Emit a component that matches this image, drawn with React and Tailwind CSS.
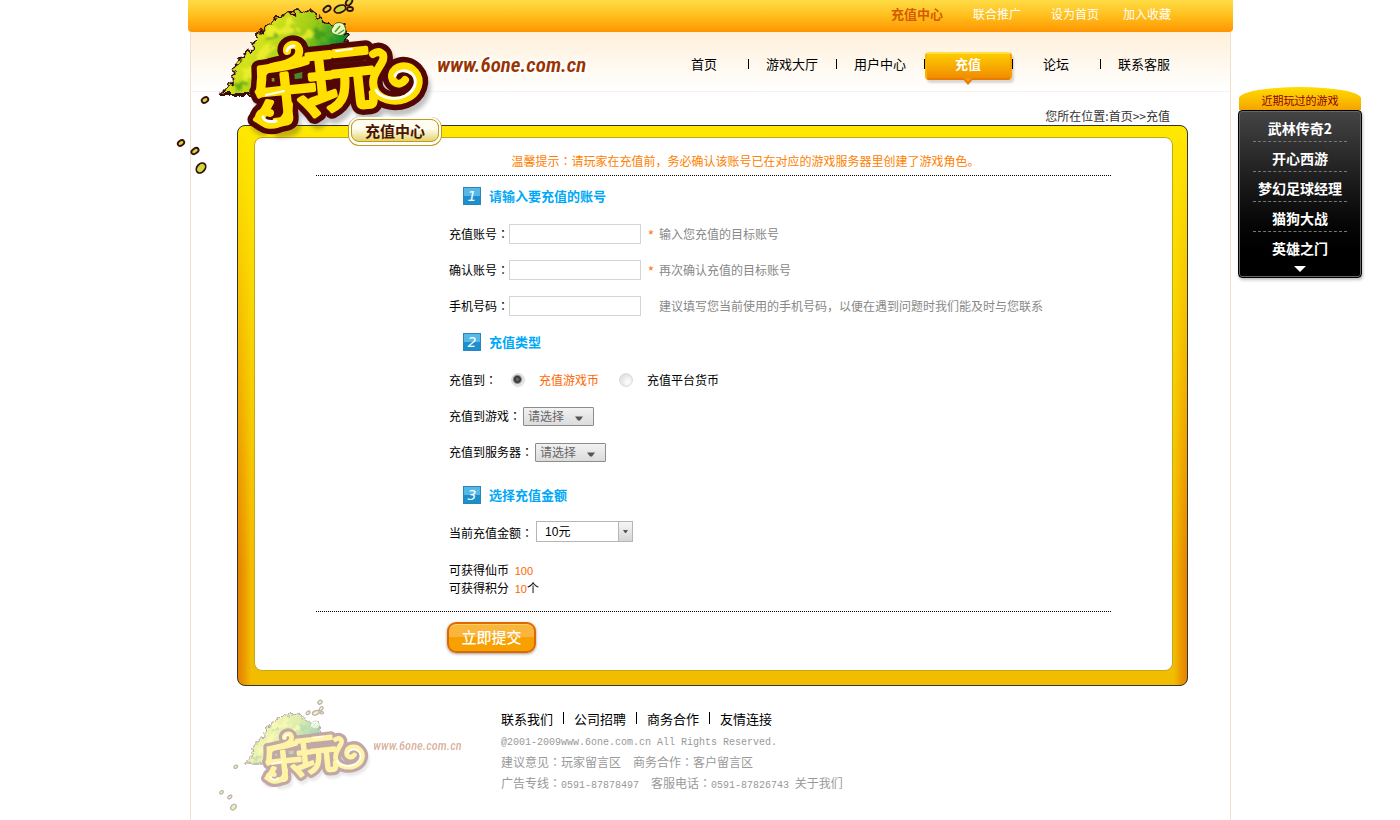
import React from "react";

const TOP_LINKS = ["设为首页", "加入收藏"];
const NAV = ["首页", "游戏大厅", "用户中心", "充值", "论坛", "联系客服"];
const GAMES = ["武林传奇2", "开心西游", "梦幻足球经理", "猫狗大战", "英雄之门"];
const FOOT_LINKS = ["联系我们", "公司招聘", "商务合作", "友情连接"];

const LEAVES = [
  [327, 9, 4, 2.5, -35],
  [340, 9, 6, 3.5, -20],
  [349, 2, 4, 2.5, -50],
  [350, 9, 3, 2, 0],
  [347, -9, 4, 3, -40],
  [205, 100, 3.5, 2.5, -30],
  [181, 143, 3.5, 2.5, -35],
  [195, 151, 4, 2.5, -35],
  [201, 168, 5.5, 4, -50],
];

const SWIRL =
  "M373 54 C379 50 385 53 383 60 C380 68 370 76 374 88 C378 100 394 103 405 99 C419 94 422 80 415 72 C408 63 394 65 392 75 C391 83 400 87 405 80";
const HEAD_CURL = "M287 51 C286 44 297 42 299 49 C301 57 292 63 276 66 C270 67 266 69 263 73";
const FOOT_CURL = "M270 113 C258 109 255 120 266 124 C278 127 288 120 289 105";

function LogoText({ className, strokeWidth }) {
  return (
    <g
      className={className}
      strokeWidth={strokeWidth}
      strokeLinejoin="round"
      fontFamily="'Noto Sans CJK SC', sans-serif"
      fontWeight="400"
    >
      <text x="250" y="118" fontSize="70" transform="rotate(-6 290 95)">乐</text>
      <text x="306" y="104" fontSize="70" transform="rotate(-6 345 80)">玩</text>
    </g>
  );
}

function Logo({ viewBox, className, id }) {
  return (
    <svg viewBox={viewBox} className={className} role="img" aria-label="乐玩">
      <defs>
        <linearGradient id={id + "tree"} x1="0" y1="0.2" x2="1" y2="0.6">
          <stop offset="0" stopColor="#a8d010" />
          <stop offset="0.3" stopColor="#d3e31c" />
          <stop offset="0.55" stopColor="#9ccb18" />
          <stop offset="0.78" stopColor="#12902a" />
          <stop offset="1" stopColor="#064a1c" />
        </linearGradient>
        <filter id={id + "soft"} x="-20%" y="-20%" width="140%" height="140%">
          <feGaussianBlur stdDeviation="2" />
        </filter>
        <filter id={id + "leafy"} x="-10%" y="-10%" width="120%" height="120%">
          <feTurbulence type="fractalNoise" baseFrequency="0.16" numOctaves="2" seed="4" result="n" />
          <feDisplacementMap in="SourceGraphic" in2="n" scale="9" xChannelSelector="R" yChannelSelector="G" />
        </filter>
        <filter id={id + "patch"} x="-30%" y="-30%" width="160%" height="160%">
          <feTurbulence type="fractalNoise" baseFrequency="0.08" numOctaves="2" seed="9" result="n" />
          <feDisplacementMap in="SourceGraphic" in2="n" scale="22" xChannelSelector="R" yChannelSelector="G" />
          <feGaussianBlur stdDeviation="1.2" />
        </filter>
      </defs>
      <path
        filter={"url(#" + id + "leafy)"}
        d="M220 94 L228 88 L227 84 L233 83 L232 76 L236 73 L233 67 L238 64 L237 60 L244 59 L246 52 L253 50 L252 43 L257 40 L257 34 L262 31 L267 25 L272 23 L275 17 L282 17 L286 12 L293 13 L298 10 L305 12 L310 10 L315 14 L318 19 L325 21 L330 25 L336 26 L343 24 L345 30 L348 34 L345 39 L352 46 L362 60 L364 76 L340 90 L300 94 Z"
        fill={"url(#" + id + "tree)"}
        stroke="#3a1010"
        strokeWidth="1.8"
      />
      <g filter={"url(#" + id + "patch)"}>
        <g fill="#f4f232" opacity="0.75">
          <ellipse cx="283" cy="29" rx="15" ry="6" transform="rotate(-25 283 29)" />
          <ellipse cx="265" cy="52" rx="12" ry="5" transform="rotate(-35 265 52)" />
          <ellipse cx="248" cy="72" rx="9" ry="5" transform="rotate(-20 248 72)" />
          <ellipse cx="303" cy="38" rx="10" ry="5" />
        </g>
        <g fill="#2f8f18" opacity="0.6">
          <ellipse cx="293" cy="46" rx="9" ry="3" transform="rotate(-25 293 46)" />
          <ellipse cx="263" cy="66" rx="8" ry="3" />
          <ellipse cx="240" cy="85" rx="10" ry="3" transform="rotate(-20 240 85)" />
          <ellipse cx="320" cy="32" rx="7" ry="5" />
          <ellipse cx="272" cy="38" rx="6" ry="2" transform="rotate(-30 272 38)" />
        </g>
      </g>
      <path d="M333 27 C334 21 344 21 345 27 C348 33 342 37 337 35 C332 34 329 31 333 27 Z" fill="#f0f6c0" stroke="#3a7a1c" />
      <path d="M335 32 L340 26 M338 34 L344 30" stroke="#3aa52a" strokeWidth="1.5" />
      {LEAVES.map(([x, y, rx, ry, r]) => (
        <ellipse
          key={x + "-" + y}
          cx={x}
          cy={y}
          rx={rx}
          ry={ry}
          transform={`rotate(${r} ${x} ${y})`}
          fill="#c6dc3c"
          stroke="#3d0c0c"
          strokeWidth="1.8"
        />
      ))}
      <g filter={"url(#" + id + "soft)"} opacity="0.3" transform="translate(3 6)">
        <LogoText className="fill-[#333] stroke-[#333]" strokeWidth="14" />
        <path d={SWIRL} fill="none" stroke="#333" strokeWidth="18" strokeLinecap="round" />
      </g>
      <LogoText className="fill-[#520606] stroke-[#520606]" strokeWidth="15" />
      <g fill="none" stroke="#520606" strokeWidth="19" strokeLinecap="round">
        <path d={SWIRL} />
        <path d={HEAD_CURL} />
        <path d={FOOT_CURL} />
      </g>
      <LogoText className="fill-[#ffe000] stroke-[#ffe000]" strokeWidth="4" />
      <g fill="none" stroke="#ffe000" strokeWidth="8" strokeLinecap="round">
        <path d={SWIRL} />
        <path d={HEAD_CURL} />
        <path d={FOOT_CURL} />
      </g>
      <g fill="none" stroke="#ffffff" strokeWidth="3" strokeLinecap="round">
        <path d="M376 90 C380 98 395 101 405 96 C416 90 418 80 412 74 C406 69 397 70 395 76" />
        <path d="M287 51 C288 47 291 46 294 46" />
        <path d="M263 117 C265 122 271 122 276 121" />
        <path d="M266 95 L284 91 M336 51 L352 49" strokeWidth="2" />
      </g>
      <text
        x="437"
        y="72"
        fontSize="21"
        fontWeight="600"
        fontStyle="italic"
        fontFamily="'Roboto Condensed', Roboto, sans-serif"
        fill="#993300"
        stroke="#ffffff"
        strokeWidth="4"
        strokeLinejoin="round"
        paintOrder="stroke"
      >
        www.6one.com.cn
      </text>
    </svg>
  );
}

function Colon() {
  return <span className="font-['Noto_Sans_CJK_TC',sans-serif]">：</span>;
}

function StepTitle({ n, children, className }) {
  return (
    <h2 className={"flex items-center gap-2 pl-[14px] text-[13px] font-bold text-[#00a8f8] " + className}>
      <span className="flex size-[18px] items-center justify-center border border-[#2a86ba] bg-linear-to-b from-[#56b8e6] from-50% to-[#1b90cc] to-50% font-['DejaVu_Sans',sans-serif] text-[14px] leading-none font-normal text-white italic">
        {n}
      </span>
      {children}
    </h2>
  );
}

function TextRow({ id, label, required, hint }) {
  return (
    <div className="flex h-9 items-center">
      <label htmlFor={id}>
        {label}
        <Colon />
      </label>
      <input id={id} type="text" className="h-5 w-[132px] border border-[#d4d4d4] bg-white px-1 outline-none" />
      <span className="w-[18px] pt-1 pl-[6px] font-['Liberation_Mono',monospace] text-[13px] text-[#ff6600]" aria-hidden="true">
        {required ? "*" : ""}
      </span>
      <span className="text-[#888]">{hint}</span>
    </div>
  );
}

function SelectRow({ id, label }) {
  return (
    <div className="flex h-9 items-center gap-[2px]">
      <label htmlFor={id}>
        {label}
        <Colon />
      </label>
      <span className="grid items-center">
        <select
          id={id}
          className="col-start-1 row-start-1 h-[19px] w-[71px] appearance-none rounded-[1px] border border-[#8c8c8c] bg-linear-to-b from-[#f2f2f2] to-[#dcdcdc] pl-1 text-[12px] leading-[16px] text-[#666] outline-none"
        >
          <option>请选择</option>
        </select>
        <svg viewBox="0 0 8 5" className="pointer-events-none col-start-1 row-start-1 mt-1 mr-[11px] h-[5px] w-2 justify-self-end">
          <path d="M0 0.5H8L5 4.5H3Z" fill="#555" />
        </svg>
      </span>
    </div>
  );
}

function RechargeForm() {
  const radio =
    "size-[14px] appearance-none rounded-full border border-[#ddd] bg-[radial-gradient(circle_at_65%_65%,#fff,#d4d4d4)] checked:bg-[radial-gradient(circle_at_45%_45%,#777_0,#333_3px,#ddd_5px,#eee_7px)]";
  return (
    <form className="px-[61px] pt-[14px] pb-[17px] text-[12px] leading-[18px] text-black" onSubmit={(e) => e.preventDefault()}>
      <p className="border-b border-dotted border-black pb-[5px] pl-16 text-center text-[#ff8000]">
        温馨提示
        <Colon />
        请玩家在充值前，务必确认该账号已在对应的游戏服务器里创建了游戏角色。
      </p>
      <div className="border-b border-dotted border-black pb-[14px] pl-[133px]">
        <StepTitle n="1" className="h-10">请输入要充值的账号</StepTitle>
        <TextRow id="account" label="充值账号" required hint="输入您充值的目标账号" />
        <TextRow id="account2" label="确认账号" required hint="再次确认充值的目标账号" />
        <TextRow id="mobile" label="手机号码" hint="建议填写您当前使用的手机号码，以便在遇到问题时我们能及时与您联系" />

        <StepTitle n="2" className="mb-[2px] h-9">充值类型</StepTitle>
        <div className="flex h-9 items-center" role="radiogroup" aria-label="充值到">
          <span>
            充值到
            <Colon />
          </span>
          <input id="to-game" type="radio" name="target" defaultChecked className={"ml-[14px] " + radio} />
          <label htmlFor="to-game" className="ml-[14px] text-[#ff6600]">充值游戏币</label>
          <input id="to-platform" type="radio" name="target" className={"ml-5 " + radio} />
          <label htmlFor="to-platform" className="ml-[14px]">充值平台货币</label>
        </div>
        <SelectRow id="game" label="充值到游戏" />
        <SelectRow id="server" label="充值到服务器" />

        <StepTitle n="3" className="mt-[7px] mb-[2px] h-9">选择充值金额</StepTitle>
        <div className="flex h-9 items-center gap-[3px]">
          <label htmlFor="amount">
            当前充值金额
            <Colon />
          </label>
          <span className="mb-[3px] grid items-center">
            <select
              id="amount"
              className="col-start-1 row-start-1 h-[21px] w-[97px] appearance-none border border-[#b5b5b5] bg-white pl-2 font-['Liberation_Sans','Noto_Sans_CJK_SC',sans-serif] text-[12px] leading-[16px] text-black outline-none"
            >
              <option>10元</option>
            </select>
            <span className="pointer-events-none col-start-1 row-start-1 flex h-[21px] w-[15px] items-center justify-center justify-self-end border border-[#b5b5b5] bg-linear-to-b from-[#f6f6f6] to-[#d6d6d6]">
              <svg viewBox="0 0 5 3" className="h-[3px] w-[5px]">
                <path d="M0 0H5L3 3H2Z" fill="#555" />
              </svg>
            </span>
          </span>
        </div>
        <p className="mt-[10px] h-[18px]">
          可获得仙币 <span className="ml-[3px] font-['Liberation_Sans',sans-serif] text-[11px] leading-none text-[#ff6600]">100</span>
        </p>
        <p className="h-[18px]">
          可获得积分 <span className="ml-[3px] font-['Liberation_Sans',sans-serif] text-[11px] leading-none text-[#ff6600]">10</span>个
        </p>
      </div>
      <button
        type="submit"
        className="mt-[10px] ml-[131px] block h-[31px] w-[89px] rounded-[9px] border-2 border-[#dd6a00] bg-linear-to-b from-[#f9b53c] from-50% to-[#f8a000] to-50% pb-[2px] text-[15px] leading-[24px] font-medium text-white shadow-[0_1px_3px_rgba(0,0,0,0.4),inset_0_1px_0_#ffd060]"
      >
        立即提交
      </button>
    </form>
  );
}

function Nav() {
  return (
    <nav className="flex justify-end pt-[18px] pr-[42px] text-[13px] text-black">
      {NAV.map((item, i) => (
        <a key={item} href="#" className="relative flex h-7 w-[88px] items-center justify-center">
          {i > 0 && <span className="absolute left-0 h-[10px] w-px bg-black" />}
          {item === "充值" ? (
            <span className="relative mt-1 flex h-7 w-[87px] items-center justify-center rounded-[4px] border-2 border-t-[#ffe040] border-r-[#f6a000] border-b-[#ea7a00] border-l-[#f9b400] bg-linear-to-b from-[#fdcb00] to-[#f08c00] pb-1 font-bold text-white shadow-[2px_3px_2px_rgba(0,0,0,0.15)]">
              {item}
              <svg viewBox="0 0 12 7" className="absolute top-[24px] h-[7px] w-3">
                <path d="M0 0H12L6 7Z" fill="#ea7a00" />
                <path d="M2 0H10L6 4Z" fill="#f59a10" />
              </svg>
            </span>
          ) : (
            item
          )}
        </a>
      ))}
    </nav>
  );
}

function RecentGames() {
  return (
    <aside className="w-[124px] shrink-0 pt-[87px] text-center">
      <h2 className="mx-px h-[23px] rounded-t-[50%] bg-linear-to-b from-[#ffdc00] to-[#f5a400] pt-1 text-[11px] leading-[18px] text-[#8a0000]">
        近期玩过的游戏
      </h2>
      <div className="flex flex-col items-center rounded-[4px] border border-black bg-linear-to-b from-[#454545] to-black pt-px pb-[5px] shadow-[inset_0_0_0_1px_#666,1px_2px_3px_rgba(0,0,0,0.25)]">
        <ul className="w-[94px]">
          {GAMES.map((g) => (
            <li key={g} className="h-[30px] border-b border-dashed border-[#777] pt-[6px] last:border-0">
              <a href="#" className="-mx-3 block text-[14px] leading-[20px] font-bold whitespace-nowrap text-white">
                {g}
              </a>
            </li>
          ))}
        </ul>
        <button type="button" aria-label="更多" className="mt-[3px] flex h-[7px] w-5 items-center justify-center">
          <svg viewBox="0 0 12 6" className="h-[6px] w-3">
            <path d="M0 0H12L6 6Z" fill="#fff" />
          </svg>
        </button>
      </div>
    </aside>
  );
}

function Footer() {
  const mono = "font-['Liberation_Mono',monospace] text-[10px]";
  return (
    <footer className="flex items-start gap-[31px] pt-3 pb-1 pl-6">
      <Logo id="f" viewBox="170 -16 430 196" className="w-[255px] shrink-0 opacity-35" />
      <div className="pt-2 text-[12px] leading-[21px] text-[#999]">
        <div className="flex h-6 items-center text-[13px] text-black">
          {FOOT_LINKS.map((l, i) => (
            <React.Fragment key={l}>
              {i > 0 && <span className="mx-[10px] h-3 w-px bg-black" />}
              <a href="#">{l}</a>
            </React.Fragment>
          ))}
        </div>
        <p className={"h-[21px] pt-[2px] " + mono}>@2001-2009www.6one.com.cn All Rights Reserved.</p>
        <p className="h-[21px]">
          建议意见
          <Colon />
          玩家留言区<span className="ml-3">商务合作</span>
          <Colon />
          客户留言区
        </p>
        <p className="h-[21px]">
          广告专线
          <Colon />
          <span className={mono}>0591-87878497</span>
          <span className="ml-3">客服电话</span>
          <Colon />
          <span className={mono}>0591-87826743</span> <a href="#" className="ml-[3px]">关于我们</a>
        </p>
      </div>
    </footer>
  );
}

export default function App() {
  return (
    <div className="flex min-h-screen gap-[5px] overflow-hidden bg-white pr-[38px] pl-[188px] font-['Noto_Sans_CJK_SC',sans-serif]">
      <div className="relative flex min-w-[1000px] flex-1 flex-col">
        <header className="flex h-8 items-center justify-end gap-[30px] rounded-b-[4px] bg-linear-to-b from-[#ffdc44] via-[#ffbe1a] to-[#ff9500] pr-[62px] pb-1 text-[12px] text-white">
          <a href="#" className="text-[13px] font-bold text-[#d75a00]">充值中心</a>
          <a href="#">联合推广</a>
          <span className="flex gap-6">
            {TOP_LINKS.map((l) => (
              <a key={l} href="#">{l}</a>
            ))}
          </span>
        </header>
        <div className="mx-[2px] flex-1 border-x border-[#f0e0cc]">
          <div className="h-[60px] border-b border-[#f3f3f3] bg-linear-to-b from-[#fff0da] to-white">
            <Nav />
          </div>
          <p className="pt-[15px] pr-[60px] text-right text-[12px] leading-[18px] text-[#333]">
            您所在位置:<a href="#">首页</a>&gt;&gt;充值
          </p>
          <main className="relative mr-[42px] ml-[46px] rounded-[8px] border border-[#333] pt-[11px] pr-[14px] pb-[14px] pl-4 [background:linear-gradient(180deg,#ffe800,rgba(255,226,0,0)_80%),linear-gradient(90deg,#e68200,#ea9400_5px,rgba(242,188,0,0)_13px,rgba(242,188,0,0)_calc(100%-13px),#ea9400_calc(100%-5px),#e68200),#f2bc00]">
            <h1 className="absolute top-[-7px] left-[113px] z-20 flex h-[23px] w-[88px] items-center justify-center rounded-[8px] border border-[#c09a20] bg-linear-to-b from-[#fffdf0] from-40% to-[#e4d468] pb-px text-[15px] leading-none font-bold text-[#4a1500] shadow-[0_0_0_2px_#fff,0_1px_0_2px_#fff,0_1px_0_3px_#c09a20]">
              充值中心
            </h1>
            <div className="rounded-[8px] border border-[#c4a818] bg-white">
              <RechargeForm />
            </div>
          </main>
          <Footer />
        </div>
        <Logo id="h" viewBox="170 0 430 180" className="pointer-events-none absolute top-0 left-[-18px] z-10 w-[430px]" />
      </div>
      <RecentGames />
    </div>
  );
}
